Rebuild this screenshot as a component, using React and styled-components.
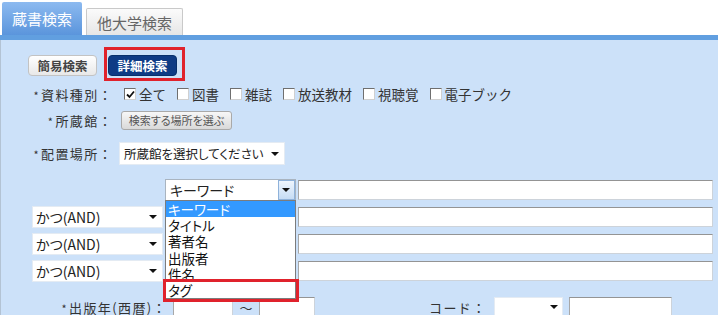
import React from 'react';
import styled, { createGlobalStyle, css } from 'styled-components';

const GlobalStyle = createGlobalStyle`
  html, body {
    margin: 0;
    padding: 0;
    background: #ffffff;
  }
  body {
    width: 718px;
    height: 315px;
    overflow: hidden;
    font-family: "Noto Sans CJK JP", "Noto Sans", "Liberation Sans", sans-serif;
    color: #333;
  }
`;

const Page = styled.div`
  width: 718px;
  height: 315px;
  overflow: hidden;
`;

const Tabs = styled.div`
  display: flex;
  align-items: flex-end;
  height: 35px;
  padding-left: 2px;
  gap: 4px;
`;

const Tab = styled.div`
  display: flex;
  align-items: center;
  justify-content: center;
  box-sizing: border-box;
  font-size: 15px;
  border-radius: 2px 2px 0 0;

  ${props =>
    props.active
      ? css`
          width: 80px;
          height: 33px;
          color: #fff;
          background: linear-gradient(#8cbaf0, #5b95dc);
        `
      : css`
          width: 97px;
          height: 27px;
          color: #666;
          background: linear-gradient(#fbfbfb, #e6e6e6);
          border: 1px solid #c9c9c9;
          border-bottom: none;
        `};
`;

const Bar = styled.div`
  height: 5px;
  background: #619fe0;
`;

const Panel = styled.div`
  position: relative;
  box-sizing: border-box;
  height: 275px;
  background: #cce1f9;
  border-left: 1px solid #b3c3d4;
  padding-top: 15px;
`;

const ModeRow = styled.div`
  display: flex;
  align-items: center;
  gap: 11px;
  padding-left: 27px;
  height: 21px;
`;

const ModeButton = styled.div`
  position: relative;
  display: flex;
  align-items: center;
  justify-content: center;
  box-sizing: border-box;
  width: 69px;
  height: 21px;
  font-size: 12.5px;
  font-weight: bold;
  border-radius: 4px;

  ${props =>
    props.primary
      ? css`
          color: #fff;
          background: #0e3b85;
          border: 1px solid #07306c;
        `
      : css`
          color: #444;
          background: linear-gradient(#ffffff, #e8e8e8);
          border: 1px solid #c3c3c3;
        `};
`;

const Mark = styled.div`
  position: absolute;
  box-sizing: border-box;
  border: 3px solid #e0222c;
  pointer-events: none;
  z-index: 5;
`;

const FieldRow = styled.div`
  display: flex;
  align-items: center;
  height: ${props => props.h}px;
  margin-top: ${props => props.gap}px;
`;

const Label = styled.div`
  box-sizing: border-box;
  width: ${props => props.w || 112}px;
  text-align: right;
  font-size: 13px;
  letter-spacing: 1.4px;
  color: #333;
  white-space: nowrap;
  flex-shrink: 0;
`;

const Star = styled.span`
  font-size: 11px;
  margin-right: 1px;
`;

const CheckGroup = styled.div`
  display: flex;
  align-items: center;
  margin-left: 11px;
`;

const CheckItem = styled.label`
  display: flex;
  align-items: center;
  gap: 3px;
  margin-right: 11px;
  font-size: 13.5px;
  color: #333;
`;

const Box = styled.span`
  display: inline-flex;
  align-items: center;
  justify-content: center;
  box-sizing: border-box;
  width: 12px;
  height: 12px;
  background: #fff;
  border: 1px solid #d0d0d0;
  border-top-color: #6f6f6f;
  border-left-color: #6f6f6f;
`;

const PlaceButton = styled.div`
  display: flex;
  align-items: center;
  justify-content: center;
  box-sizing: border-box;
  margin-left: 8px;
  width: 111px;
  height: 19px;
  font-size: 11px;
  font-feature-settings: "palt";
  color: #555;
  background: linear-gradient(#f7f7f7, #d9d9d9);
  border: 1px solid #a9a9a9;
  border-radius: 3px;
`;

const Select = styled.div`
  position: relative;
  display: flex;
  align-items: center;
  box-sizing: border-box;
  width: ${props => props.w}px;
  height: ${props => props.h || 22}px;
  margin-left: ${props => props.ml || 0}px;
  padding-left: ${props => props.pl || 4}px;
  background: #fff;
  border: 1px solid ${props => props.line || '#e4ebf3'};
  font-size: ${props => props.fs || 14}px;
  font-feature-settings: "palt";
  color: #222;
  white-space: nowrap;
  flex-shrink: 0;
`;

const Arrow = styled.span`
  position: absolute;
  right: ${props => props.r || 6}px;
  top: 50%;
  margin-top: -2px;
  width: 0;
  height: 0;
  border-left: 4px solid transparent;
  border-right: 4px solid transparent;
  border-top: 4px solid #111;
`;

const ArrowButton = styled.span`
  position: absolute;
  right: 0;
  top: 0;
  bottom: 0;
  width: 17px;
  box-sizing: border-box;
  background: linear-gradient(#eef5fd, #c6dcf4);
  border: 1px solid #8fb2da;
`;

const TextInput = styled.div`
  box-sizing: border-box;
  width: ${props => props.w || 415}px;
  height: 20px;
  margin-left: ${props => props.ml || 0}px;
  background: #fff;
  border: 1px solid #cdd3da;
  border-top-color: #949494;
  border-left-color: #a8a8a8;
  flex-shrink: 0;
`;

const SearchGrid = styled.div`
  display: grid;
  grid-template-columns: 131px 131px 415px;
  grid-auto-rows: 22px;
  column-gap: 2px;
  row-gap: 5px;
  align-items: center;
  margin-top: 14px;
  margin-left: 31px;
`;

const Cell = styled.div`
  position: relative;
  display: flex;
  align-items: center;
  height: 22px;
`;

const DropList = styled.div`
  position: absolute;
  left: 0;
  top: 21px;
  width: 131px;
  box-sizing: border-box;
  background: #fff;
  border: 1px solid #7c7c7c;
  z-index: 4;
`;

const DropItem = styled.div`
  height: 16.2px;
  line-height: 16.2px;
  padding-left: 2px;
  font-size: 13.5px;
  font-feature-settings: "palt";
  color: ${props => (props.selected ? '#fff' : '#111')};
  background: ${props => (props.selected ? '#3399ff' : 'transparent')};
  white-space: nowrap;
`;

const Tilde = styled.div`
  width: 26px;
  text-align: center;
  font-size: 13px;
  color: #333;
  flex-shrink: 0;
`;

const CodeLabel = styled.div`
  margin-left: 114px;
  width: 65px;
  font-size: 13px;
  letter-spacing: 1.4px;
  color: #333;
  white-space: nowrap;
  flex-shrink: 0;
`;

const kinds = [
  { name: '全て', checked: true },
  { name: '図書' },
  { name: '雑誌' },
  { name: '放送教材' },
  { name: '視聴覚' },
  { name: '電子ブック' },
];

const fields = ['キーワード', 'タイトル', '著者名', '出版者', '件名', 'タグ'];

function Check({ checked }) {
  return (
    <Box>
      {checked && (
        <svg width="9" height="9" viewBox="0 0 9 9">
          <path d="M1 4.5 L3.5 7 L8 1.5" fill="none" stroke="#111" strokeWidth="1.8" />
        </svg>
      )}
    </Box>
  );
}

function AndSelect() {
  return (
    <Select w={131} pl={3}>
      かつ(AND)
      <Arrow r={5} />
    </Select>
  );
}

export default function App() {
  return (
    <>
      <GlobalStyle />
      <Page>
        <Tabs>
          <Tab active>蔵書検索</Tab>
          <Tab>他大学検索</Tab>
        </Tabs>
        <Bar />
        <Panel>
          <ModeRow>
            <ModeButton>簡易検索</ModeButton>
            <ModeButton primary>
              詳細検索
              <Mark style={{ left: -5, right: -9, top: -9, bottom: -6 }} />
            </ModeButton>
          </ModeRow>

          <FieldRow h={20} gap={8}>
            <Label><Star>*</Star>資料種別：</Label>
            <CheckGroup>
              {kinds.map(k => (
                <CheckItem key={k.name}>
                  <Check checked={k.checked} />
                  {k.name}
                </CheckItem>
              ))}
            </CheckGroup>
          </FieldRow>

          <FieldRow h={20} gap={6}>
            <Label><Star>*</Star>所蔵館：</Label>
            <PlaceButton>検索する場所を選ぶ</PlaceButton>
          </FieldRow>

          <FieldRow h={23} gap={12}>
            <Label><Star>*</Star>配置場所：</Label>
            <Select w={166} h={23} ml={6} fs={12.5}>
              所蔵館を選択してください
              <Arrow r={5} />
            </Select>
          </FieldRow>

          <SearchGrid>
            <Cell />
            <Cell>
              <Select w={131} line="#a9b4c0">
                キーワード
                <ArrowButton>
                  <Arrow r={4} />
                </ArrowButton>
              </Select>
              <DropList>
                {fields.map((f, i) => (
                  <DropItem key={f} selected={i === 0}>{f}</DropItem>
                ))}
                <Mark style={{ left: -3, width: 136, top: 78, height: 23 }} />
              </DropList>
            </Cell>
            <Cell><TextInput /></Cell>

            {[0, 1, 2].map(i => (
              <React.Fragment key={i}>
                <Cell><AndSelect /></Cell>
                <Cell />
                <Cell><TextInput /></Cell>
              </React.Fragment>
            ))}
          </SearchGrid>

          <FieldRow h={20} gap={15}>
            <Label w={166}><Star>*</Star>出版年(西暦)：</Label>
            <TextInput w={60} ml={6} />
            <Tilde>〜</Tilde>
            <TextInput w={56} />
            <CodeLabel>コード：</CodeLabel>
            <Select w={69} h={20}>
              <Arrow r={4} />
            </Select>
            <TextInput w={103} ml={6} />
          </FieldRow>
        </Panel>
      </Page>
    </>
  );
}
